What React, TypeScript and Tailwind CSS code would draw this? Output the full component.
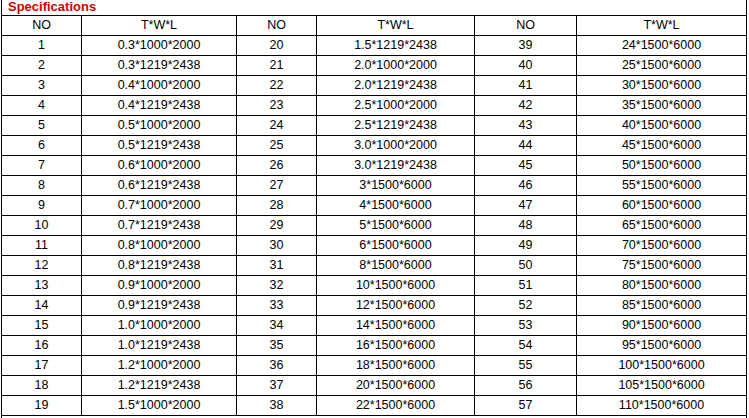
import React from 'react';

const left = [
  '0.3*1000*2000', '0.3*1219*2438', '0.4*1000*2000', '0.4*1219*2438', '0.5*1000*2000',
  '0.5*1219*2438', '0.6*1000*2000', '0.6*1219*2438', '0.7*1000*2000', '0.7*1219*2438',
  '0.8*1000*2000', '0.8*1219*2438', '0.9*1000*2000', '0.9*1219*2438', '1.0*1000*2000',
  '1.0*1219*2438', '1.2*1000*2000', '1.2*1219*2438', '1.5*1000*2000',
];

const middle = [
  '1.5*1219*2438', '2.0*1000*2000', '2.0*1219*2438', '2.5*1000*2000', '2.5*1219*2438',
  '3.0*1000*2000', '3.0*1219*2438', '3*1500*6000', '4*1500*6000', '5*1500*6000',
  '6*1500*6000', '8*1500*6000', '10*1500*6000', '12*1500*6000', '14*1500*6000',
  '16*1500*6000', '18*1500*6000', '20*1500*6000', '22*1500*6000',
];

const right = [24, 25, 30, 35, 40, 45, 50, 55, 60, 65, 70, 75, 80, 85, 90, 95, 100, 105, 110].map(
  (t) => `${t}*1500*6000`
);

const cell = 'border border-black p-0 h-[20px] text-center align-middle leading-none';

export default function App() {
  return (
    <div className="w-[749px] h-[418px] bg-white overflow-hidden font-['Liberation_Sans',Arial,sans-serif] text-[12.5px] text-black">
      <div className="ml-[1px] w-[746px] border-x border-black">
        <div className="h-[15px] pl-[6px] text-[13px] leading-[13px] font-bold text-[#d40000]">
          Specifications
        </div>
      </div>
      <table className="ml-[1px] w-[746px] table-fixed border-collapse">
        <colgroup>
          <col className="w-[80px]" />
          <col className="w-[155px]" />
          <col className="w-[80px]" />
          <col className="w-[158px]" />
          <col className="w-[102px]" />
          <col className="w-[170px]" />
        </colgroup>
        <tbody>
          <tr>
            <td className={cell}>NO</td>
            <td className={cell}>T*W*L</td>
            <td className={cell}>NO</td>
            <td className={cell}>T*W*L</td>
            <td className={cell}>NO</td>
            <td className={cell}>T*W*L</td>
          </tr>
          {left.map((size, i) => (
            <tr key={i}>
              <td className={cell}>{i + 1}</td>
              <td className={cell}>{size}</td>
              <td className={cell}>{i + 20}</td>
              <td className={cell}>{middle[i]}</td>
              <td className={cell}>{i + 39}</td>
              <td className={cell}>{right[i]}</td>
            </tr>
          ))}
        </tbody>
      </table>
      <div className="ml-[1px] w-[746px] h-[10px] border-x border-black" />
    </div>
  );
}
